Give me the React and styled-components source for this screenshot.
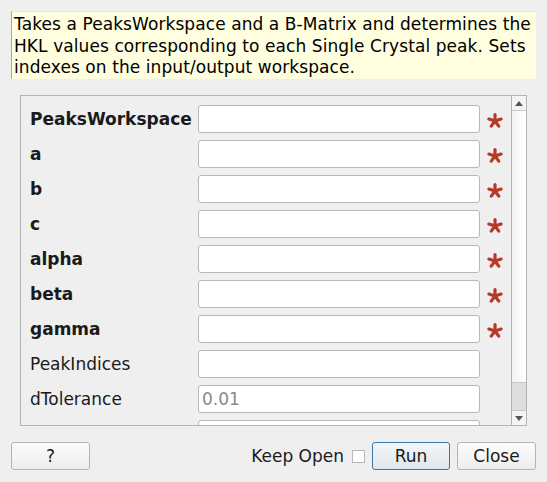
import React from 'react'
import styled, { createGlobalStyle } from 'styled-components'

const GlobalStyle = createGlobalStyle`
  html, body {
    margin: 0;
    padding: 0;
    background: #efefef;
    font-family: "DejaVu Sans", "Liberation Sans", sans-serif;
    font-size: 17px;
    color: #000;
  }
`

const Dialog = styled.div`
  width: 547px;
  height: 482px;
  box-sizing: border-box;
  padding: 11px 11px 0 11px;
  display: flex;
  flex-direction: column;
`

const Description = styled.div`
  height: 68px;
  box-sizing: border-box;
  width: 525px;
  background: #ffffe0;
  border-left: 1px solid #a8a8a8;
  border-top: 1px solid #e4e4d0;
  padding: 2px 0 0 2px;
  line-height: 21.5px;
  letter-spacing: 0.08px;
`

const Frame = styled.div`
  margin: 16px 0 0 9px;
  width: 507px;
  height: 331px;
  box-sizing: border-box;
  border: 1px solid #b4b4b4;
  display: flex;
  overflow: hidden;
`

const Content = styled.div`
  flex: 1;
  padding: 9px 0 0 9px;
  display: flex;
  flex-direction: column;
  gap: 7px;
  overflow: hidden;
`

const Row = styled.div`
  display: flex;
  align-items: center;
  height: 28px;
  flex-shrink: 0;
`

const Label = styled.div`
  width: 168px;
  font-weight: ${p => (p.$required ? 'bold' : 'normal')};
  color: #1a1a1a;
`

const Field = styled.div`
  width: 282px;
  height: 28px;
  box-sizing: border-box;
  background: #fff;
  border: 1px solid #b8b8b8;
  border-radius: 3px;
  padding: 0 3px;
  display: flex;
  align-items: center;
  color: #8a8a8a;
`

const Mark = styled.div`
  width: 30px;
  display: flex;
  justify-content: center;
  padding-top: 3px;
`

const Scrollbar = styled.div`
  width: 14px;
  border-left: 1px solid #b4b4b4;
  display: flex;
  flex-direction: column;
  background: linear-gradient(to right, #f2f2f2, #ffffff);
`

const Arrow = styled.div`
  height: 14px;
  display: flex;
  align-items: center;
  justify-content: center;
  background: #f4f4f4;
  border-bottom: ${p => (p.$up ? '1px solid #c8c8c8' : 'none')};
`

const Track = styled.div`
  flex: 1;
  display: flex;
  flex-direction: column;
  justify-content: flex-end;
`

const Thumb = styled.div`
  height: 27px;
  background: #dedede;
  border-top: 1px solid #c8c8c8;
  border-bottom: 1px solid #c8c8c8;
`

const Footer = styled.div`
  margin-top: 16px;
  display: flex;
  align-items: center;
`

const Button = styled.button`
  width: ${p => p.$w || 79}px;
  height: 28px;
  box-sizing: border-box;
  font-family: inherit;
  font-size: 17px;
  color: #1a1a1a;
  border-radius: 3px;
  border: 1px solid ${p => (p.$primary ? '#3b78a8' : '#b4b4b4')};
  background: ${p =>
    p.$primary
      ? 'linear-gradient(#f4f6f8, #dfe6ec)'
      : 'linear-gradient(#fcfcfc, #ededed)'};
  padding: 0;
  margin-left: ${p => p.$ml || 0}px;
`

const Spacer = styled.div`
  flex: 1;
`

const KeepOpen = styled.span`
  color: #1a1a1a;
`

const Check = styled.span`
  width: 13px;
  height: 13px;
  box-sizing: border-box;
  border: 1px solid #b8b8b8;
  background: #fff;
  margin: 0 7px 0 8px;
`

const Asterisk = () => (
  <svg width="16" height="16" viewBox="-8 -8 16 16">
    {[0, 72, 144, 216, 288].map(a => (
      <line key={a} x1="0" y1="0" x2="0" y2="-6.4" stroke="#b7392a" strokeWidth="3.2"
        strokeLinecap="round" transform={`rotate(${a})`} />
    ))}
  </svg>
)

const Tri = ({ up }) => (
  <svg width="8" height="5" viewBox="0 0 8 5">
    <polygon points={up ? '0,5 8,5 4,0' : '0,0 8,0 4,5'} fill="#555" />
  </svg>
)

const rows = [
  { name: 'PeaksWorkspace', req: true },
  { name: 'a', req: true },
  { name: 'b', req: true },
  { name: 'c', req: true },
  { name: 'alpha', req: true },
  { name: 'beta', req: true },
  { name: 'gamma', req: true },
  { name: 'PeakIndices' },
  { name: 'dTolerance', value: '0.01' },
  { name: '' },
]

export default function App() {
  return (
    <>
      <GlobalStyle />
      <Dialog>
        <Description>
          Takes a PeaksWorkspace and a B-Matrix and determines the HKL values corresponding to each Single Crystal peak. Sets indexes on the input/output workspace.
        </Description>
        <Frame>
          <Content>
            {rows.map((r, i) => (
              <Row key={i}>
                <Label $required={r.req}>{r.name}</Label>
                <Field>{r.value}</Field>
                <Mark>{r.req && <Asterisk />}</Mark>
              </Row>
            ))}
          </Content>
          <Scrollbar>
            <Arrow $up><Tri up /></Arrow>
            <Track><Thumb /></Track>
            <Arrow><Tri /></Arrow>
          </Scrollbar>
        </Frame>
        <Footer>
          <Button>?</Button>
          <Spacer />
          <KeepOpen>Keep Open</KeepOpen>
          <Check />
          <Button $primary $w={78}>Run</Button>
          <Button $ml={7}>Close</Button>
        </Footer>
      </Dialog>
    </>
  )
}
